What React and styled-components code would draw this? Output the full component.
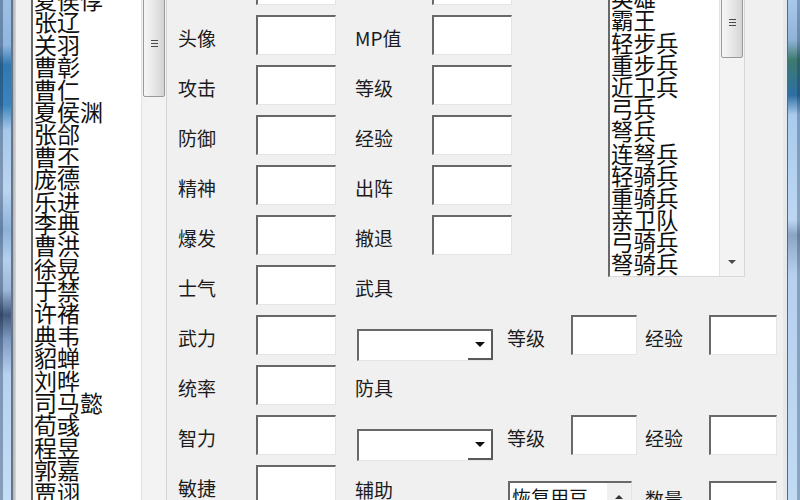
import React from 'react';
import styled, { createGlobalStyle, css } from 'styled-components';

const GlobalStyle = createGlobalStyle`
  html, body {
    margin: 0;
    padding: 0;
    background: #f0f0f0;
  }
  body {
    font-family: "Noto Sans CJK SC", "Noto Sans", sans-serif;
  }
`;

// Window shell
const Screen = styled.div`
  width: 800px;
  height: 500px;
  overflow: hidden;
  display: flex;
  background: #f0f0f0;
`;

const Frame = styled.div`
  flex: none;
  height: 100%;
  ${p => p.$side === 'left' ? css`
    width: 16px;
    background:
      linear-gradient(to right, rgba(20, 40, 70, 0.35) 0, rgba(20, 40, 70, 0.35) 3px, transparent 3px, transparent 11px, #6b747d 11px, #6b747d 13px, #aab2ba 13px, #d4d8dc 16px),
      linear-gradient(to bottom, #9dbfe4 0, #8fb6df 9%, #2f78b0 13%, #3b84bc 21%, #a7c8ea 26%, #b9d5f1 38%, #8eb1d8 46%, #b3d0ee 52%, #9db8d8 58%, #43587a 63%, #7f9cc2 68%, #b5d2f0 75%, #c4ddf5 100%);
  ` : css`
    width: 17px;
    background:
      linear-gradient(to right, #e6e9ec 0, #e6e9ec 4px, #56687a 4px, #56687a 5px, transparent 5px, transparent 14px, rgba(20, 40, 70, 0.3) 14px),
      linear-gradient(to bottom, #a8c9ec 0, #8fb3d8 8%, #3d7a6e 12%, #2d6fa3 19%, #a9cbee 23%, #bcd7f2 44%, #8aa4c4 47%, #a2bcd8 51%, #b5d1ee 55%, #c0dbf4 100%);
  `}
`;

const Client = styled.div`
  flex: 1;
  display: flex;
  align-items: flex-start;
  padding-left: 15px;
  background: #f0f0f0;
  color: #1c1c1c;
`;

// List boxes
const ListBox = styled.div`
  flex: none;
  display: flex;
  box-sizing: border-box;
  width: ${p => p.$w}px;
  height: ${p => p.$h}px;
  margin-left: ${p => p.$ml || 0}px;
  background: #fff;
  border-left: 2px solid #686868;
  border-bottom: ${p => p.$bottom ? '1px solid #d8d8d8' : 'none'};
`;

const ListBody = styled.div`
  flex: 1;
  overflow: hidden;
  padding-left: 1px;
`;

const ListScroll = styled.div`
  margin-top: ${p => p.$offset}px;
`;

const ListItem = styled.div`
  height: ${p => p.$row}px;
  line-height: ${p => p.$row}px;
  font-size: ${p => p.$size}px;
  white-space: nowrap;
  color: #111;
`;

const ScrollBar = styled.div`
  flex: none;
  width: 24px;
  display: flex;
  flex-direction: column;
  background: #f3f3f3;
  border-left: 1px solid #e2e2e2;
  border-right: 1px solid #d6d6d6;
`;

const ArrowButton = styled.div`
  flex: none;
  height: ${p => p.$h}px;
  display: flex;
  align-items: center;
  justify-content: center;
  margin-top: ${p => p.$end ? 'auto' : '0'};
`;

const Triangle = styled.span`
  width: 0;
  height: 0;
  border-left: ${p => p.$size}px solid transparent;
  border-right: ${p => p.$size}px solid transparent;
  ${p => p.$up
    ? css`border-bottom: ${p.$size}px solid ${p.$color || '#3a3a3a'};`
    : css`border-top: ${p.$size}px solid ${p.$color || '#3a3a3a'};`}
`;

const Thumb = styled.div`
  flex: none;
  height: ${p => p.$h}px;
  margin: ${p => p.$top || 0}px 1px 0;
  box-sizing: border-box;
  border: 1px solid #9a9a9a;
  border-radius: 2px;
  background: linear-gradient(to right, #f6f6f6, #e6e6e6 55%, #d3d3d3);
  display: flex;
  align-items: center;
  justify-content: center;
`;

const Grip = styled.div`
  width: 7px;
  height: 7px;
  background: repeating-linear-gradient(to bottom, #4a4a4a 0, #4a4a4a 1px, transparent 1px, transparent 3px);
`;

// Form parts
const Main = styled.div`
  flex: none;
  display: flex;
  flex-direction: column;
  gap: 10px;
  margin-top: -35px;
  padding-left: 11px;
`;

const TopSection = styled.div`
  display: flex;
  align-items: flex-start;
`;

const StatColumn = styled.div`
  display: flex;
  flex-direction: column;
  gap: 10px;
`;

const Row = styled.div`
  display: flex;
  align-items: center;
  height: 40px;
`;

const dropped = css`
  ${p => p.$drop != null && css`
    align-self: flex-start;
    margin-top: ${p.$drop}px;
  `}
`;

const Label = styled.span`
  flex: none;
  box-sizing: border-box;
  width: ${p => p.$w}px;
  height: 40px;
  margin-left: ${p => p.$ml || 0}px;
  padding-top: 6px;
  line-height: 34px;
  font-size: 19px;
  white-space: nowrap;
  color: #1c1c1c;
  ${dropped}
`;

const sunken = css`
  box-sizing: border-box;
  background: #fff;
  border-top: 2px solid #686868;
  border-left: 2px solid #686868;
  border-right: 1px solid #e4e4e4;
  border-bottom: 1px solid #e4e4e4;
`;

const TextBox = styled.input.attrs({ type: 'text', readOnly: true })`
  ${sunken}
  flex: none;
  width: ${p => p.$w}px;
  height: 40px;
  margin: 0 0 0 ${p => p.$ml || 0}px;
  padding: 0 4px;
  outline: none;
  font: inherit;
  ${dropped}
`;

const Combo = styled.div`
  ${sunken}
  flex: none;
  display: flex;
  width: 136px;
  height: 32px;
  margin-left: ${p => p.$ml || 0}px;
  border-right: none;
  ${dropped}
`;

const ComboButton = styled.div`
  margin-left: auto;
  width: 25px;
  box-sizing: border-box;
  border-right: 2px solid #595959;
  border-bottom: 2px solid #595959;
  background: #fff;
  display: flex;
  align-items: center;
  justify-content: center;
`;

const ItemPicker = styled.div`
  ${sunken}
  flex: none;
  display: flex;
  width: 124px;
  height: 44px;
  ${dropped}
`;

const PickerText = styled.span`
  flex: 1;
  padding: 2px 0 0 2px;
  font-size: 19px;
  line-height: 24px;
  white-space: nowrap;
  color: #111;
`;

const PickerSpin = styled.div`
  flex: none;
  width: 24px;
  background: #f0f0f0;
  display: flex;
  justify-content: center;
  padding-top: 12px;
  box-sizing: border-box;
`;

const officers = [
  '夏侯惇', '张辽', '关羽', '曹彰', '曹仁', '夏侯渊', '张郃', '曹丕', '庞德', '乐进',
  '李典', '曹洪', '徐晃', '于禁', '许褚', '典韦', '貂蝉', '刘晔', '司马懿', '荀彧',
  '程昱', '郭嘉', '贾诩', '荀攸',
];

const units = [
  '君主', '英雄', '霸王', '轻步兵', '重步兵', '近卫兵', '弓兵', '弩兵', '连弩兵',
  '轻骑兵', '重骑兵', '亲卫队', '弓骑兵', '弩骑兵', '象兵',
];

const statRows = [
  ['', ''],
  ['头像', 'MP值'],
  ['攻击', '等级'],
  ['防御', '经验'],
  ['精神', '出阵'],
  ['爆发', '撤退'],
];

const StatRow = ({ left, right }) => (
  <Row>
    <Label $w={78}>{left}</Label>
    <TextBox $w={80} />
    <Label $w={77} $ml={19}>{right}</Label>
    <TextBox $w={80} />
  </Row>
);

const EquipRow = ({ label }) => (
  <Row>
    <Label $w={78}>{label}</Label>
    <TextBox $w={80} />
    <Combo $ml={21} $drop={14}>
      <ComboButton>
        <Triangle $size={5} $color="#111" />
      </ComboButton>
    </Combo>
    <Label $w={64} $ml={14}>等级</Label>
    <TextBox $w={66} />
    <Label $w={64} $ml={8}>经验</Label>
    <TextBox $w={68} />
  </Row>
);

const App = () => (
  <>
    <GlobalStyle />
    <Screen>
      <Frame $side="left" />
      <Client>
        <ListBox $w={136} $h={500}>
          <ListBody>
            <ListScroll $offset={-12}>
              {officers.map(name => (
                <ListItem key={name} $row={22.4} $size={23}>{name}</ListItem>
              ))}
            </ListScroll>
          </ListBody>
          <ScrollBar>
            <Thumb $h={107} $top={-10}><Grip /></Thumb>
          </ScrollBar>
        </ListBox>

        <Main>
          <TopSection>
            <StatColumn>
              {statRows.map(([l, r], i) => <StatRow key={i} left={l} right={r} />)}
              <Row>
                <Label $w={78}>士气</Label>
                <TextBox $w={80} />
                <Label $w={77} $ml={19}>武具</Label>
              </Row>
            </StatColumn>
            <ListBox $w={137} $h={312} $ml={96} $bottom>
              <ListBody>
                <ListScroll $offset={-1}>
                  {units.map(u => <ListItem key={u} $row={22.2} $size={22.5}>{u}</ListItem>)}
                </ListScroll>
              </ListBody>
              <ScrollBar>
                <ArrowButton $h={22} />
                <Thumb $h={71}><Grip /></Thumb>
                <ArrowButton $h={28} $end>
                  <Triangle $size={4} $color="#4a4a4a" />
                </ArrowButton>
              </ScrollBar>
            </ListBox>
          </TopSection>

          <EquipRow label="武力" />
          <Row>
            <Label $w={78}>统率</Label>
            <TextBox $w={80} />
            <Label $w={77} $ml={19}>防具</Label>
          </Row>
          <EquipRow label="智力" />
          <Row>
            <Label $w={78}>敏捷</Label>
            <TextBox $w={80} />
            <Label $w={153} $ml={19} $drop={2}>辅助</Label>
            <ItemPicker $drop={16}>
              <PickerText>恢复用豆</PickerText>
              <PickerSpin>
                <Triangle $up $size={4} $color="#333" />
              </PickerSpin>
            </ItemPicker>
            <Label $w={64} $ml={13} $drop={11}>数量</Label>
            <TextBox $w={68} $drop={16} />
          </Row>
        </Main>
      </Client>
      <Frame $side="right" />
    </Screen>
  </>
);

export default App;
